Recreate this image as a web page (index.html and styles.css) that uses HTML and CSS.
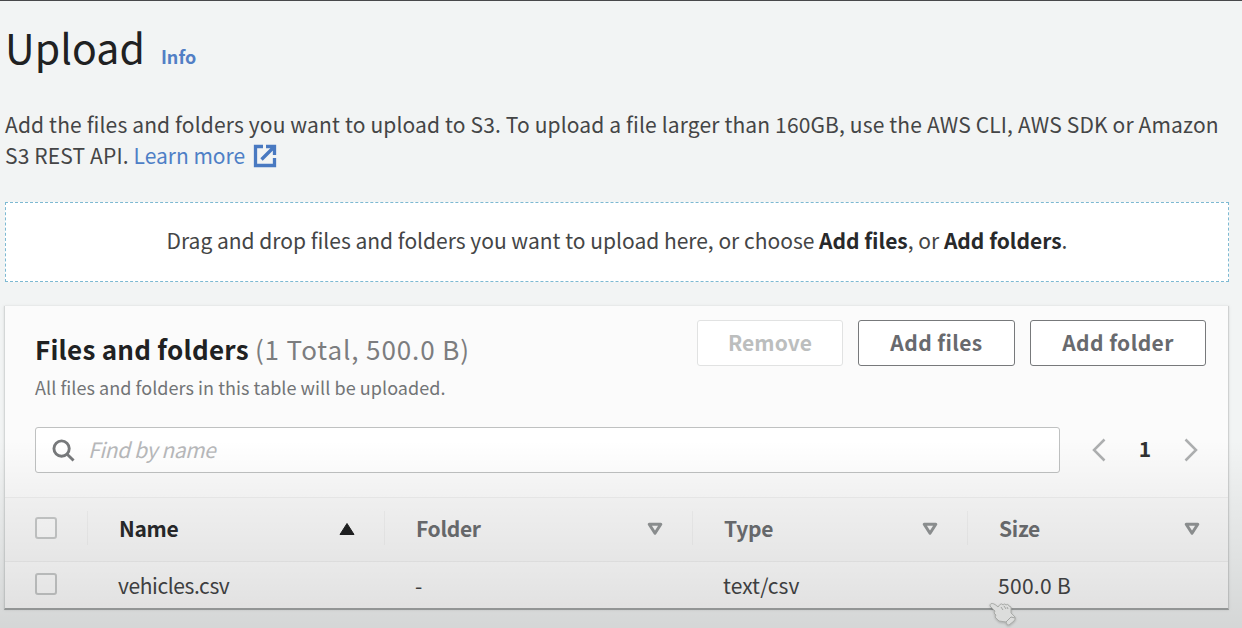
FILE: index.html
```
<!DOCTYPE html>
<html lang="en">
<head>
<meta charset="utf-8">
<title>Upload</title>
<link rel="stylesheet" href="styles.css">
</head>
<body>
<main class="page">
  <header class="heading"><h1>Upload</h1><a class="info">Info</a></header>
  <p class="intro"><span class="intro-first">Add the files and folders you want to upload to S3. To upload a file larger than 160GB, use the AWS CLI, AWS SDK or Amazon</span><br><span class="intro-second">S3 REST API.</span> <a class="learn">Learn more</a><svg class="external" viewBox="0 0 24 24"><path d="M10 2.5H2.5V21.5H21.5V14M13 2.5h8.500V11M21 3L8.500 15.500"/></svg></p>
  <section class="dropzone"><p><span class="drop-lead">Drag and drop files and folders you want to upload here, or choose</span> <b>Add files</b>, or <b>Add folders</b>.</p></section>
  <section class="panel">
    <div class="panel-head">
      <div>
        <h2><b>Files and folders</b> <span class="count">(1 Total, 500.0 B)</span></h2>
        <p class="description">All files and folders in this table will be uploaded.</p>
      </div>
      <div class="actions"><button class="remove" disabled>Remove</button><button class="add-files">Add files</button><button class="add-folder">Add folder</button></div>
    </div>
    <div class="tools">
      <div class="search"><svg class="lens" viewBox="0 0 24 24"><circle cx="10" cy="10" r="8"/><path d="M15.8 15.8L22.5 22.5"/></svg><span class="placeholder">Find by name</span></div>
      <nav class="pager"><svg viewBox="0 0 14 24"><path d="M12.5 1.5L2 12l10.500 10.500"/></svg><b>1</b><svg viewBox="0 0 14 24"><path d="M1.500 1.500L12 12L1.500 22.500"/></svg></nav>
    </div>
    <div class="row header">
      <div class="cell select"><span class="box"></span></div>
      <div class="cell name"><b>Name</b><svg class="sort" viewBox="0 0 16 14"><path class="filled" d="M8 1.500L15 12.500H1Z"/></svg></div>
      <div class="cell"><b>Folder</b><svg class="sort" viewBox="0 0 16 14"><path d="M2.200 2.200H13.800L8 11.300Z"/></svg></div>
      <div class="cell"><b>Type</b><svg class="sort" viewBox="0 0 16 14"><path d="M2.200 2.200H13.800L8 11.300Z"/></svg></div>
      <div class="cell"><b>Size</b><svg class="sort" viewBox="0 0 16 14"><path d="M2.200 2.200H13.800L8 11.300Z"/></svg></div>
    </div>
    <div class="row data">
      <div class="cell select"><span class="box"></span></div>
      <div class="cell"><span class="t-file">vehicles.csv</span></div><div class="cell"><span>-</span></div><div class="cell"><span class="t-type">text/csv</span></div><div class="cell"><span class="t-size">500.0 B</span></div>
    </div>
  </section>
</main>
<div class="shade"></div>
<svg class="hand" viewBox="0 0 30 26"><path class="hand-shape" d="M2 4C2 0 6 1 10 5L12 2.500Q14 1 15 3Q17 1 18 3Q20 1 21 4L23 5L23 11L27 15Q28 17 26 19L21 23Q19 24 18 20L11 19L7 15L8 13L6 11L7 9Z"/><path class="hand-lines" d="M13 5l2 3M16 4l2 3M19 5l1 2M18 20l5-5 4 1"/></svg>
</body>
</html>
```
FILE: styles.css
```
* { box-sizing: border-box; }
html { height: 628px; overflow: hidden; }
body { margin: 0; height: 628px; overflow: hidden; background: #f2f4f4; border-top: 1px solid #48484b; color: #444546; font: 21px/30px "Noto Sans CJK SC", "Noto Sans", sans-serif; }
h1, h2, p { margin: 0; font-weight: 400; }
b { font-weight: 700; }
svg { fill: none; flex: none; }
.page { padding: 15px 13px 0 4px; }
.heading { display: flex; align-items: baseline; gap: 16px; height: 93px; white-space: nowrap; padding-left: 1px; }
h1 { font-size: 41px; line-height: 60px; color: #202122; letter-spacing: .1px; }
.info { font-size: 18px; font-weight: 700; color: #527fc5; }
.intro { height: 93px; padding-left: 1px; line-height: 30.500px; white-space: nowrap; }
.intro-first { letter-spacing: .14px; }
.intro-second { letter-spacing: .15px; }
.learn { color: #4e7fc6; }
.external { width: 24px; height: 24px; margin-left: 8px; vertical-align: -4px; stroke: #4979c1; stroke-width: 3.300; }
.dropzone { height: 80px; margin-left: 1px; border: 1px dashed #7db9d2; background: #fff; display: flex; align-items: center; justify-content: center; white-space: nowrap; padding-bottom: 4px; }
.dropzone b { color: #28292b; }
.panel { margin-top: 24px; height: 304px; background: #fbfbfb; border-left: 1px solid #d4d7d7; border-right: 1px solid #cfd1d1; border-bottom: 2px solid #a4a7a7; box-shadow: 0 0 2px #bbb8; }
.panel-head { height: 121px; display: flex; justify-content: space-between; padding: 14px 22px 0 30px; white-space: nowrap; }
h2 { padding-top: 11px; font-size: 26px; line-height: 36px; color: #202122; letter-spacing: .25px; }
.count { color: #7c7d7f; letter-spacing: .9px; }
.description { font-size: 18px; line-height: 26px; margin-top: 7px; color: #727476; letter-spacing: .05px; }
.actions { display: flex; gap: 15px; }
button { height: 46px; padding: 0 0 3px; background: #fff; border: 1px solid #77797b; border-radius: 3px; font: 700 21px/30px "Noto Sans CJK SC", "Noto Sans", sans-serif; color: #686a6e; letter-spacing: .4px; }
.remove { width: 146px; color: #bcbebe; border-color: #e1e2e2; letter-spacing: .1px; }
.add-files { width: 157px; }
.add-folder { width: 176px; }
.tools { height: 70px; padding: 0 30px 24px 30px; display: flex; justify-content: space-between; }
.search { width: 1025px; height: 46px; background: #fff; border: 1px solid #bfc1c1; border-radius: 3px; display: flex; align-items: center; gap: 13px; padding: 0 0 3px 16px; }
.lens { width: 23px; height: 23px; margin-top: 3px; stroke: #77797b; stroke-width: 3; }
.placeholder { color: #b7b8ba; font-style: italic; letter-spacing: -.4px; }
.pager { display: flex; align-items: center; justify-content: space-between; width: 106px; color: #303132; }
.pager b { margin-top: -4px; }
.pager svg { width: 14px; height: 24px; stroke: #adafb0; stroke-width: 2.500; }
.row { display: grid; grid-template-columns: 82px 297px 308px 275px 1fr; align-items: center; white-space: nowrap; }
.header { height: 65px; background: #f9f9f9; border-top: 1px solid #eee; border-bottom: 1px solid #efefef; color: #6c6e71; padding-bottom: 3px; }
.cell { display: flex; align-items: center; justify-content: space-between; padding: 0 29px 0 31px; }
.header .cell + .cell { border-left: 1px solid #f0f0f0; height: 34px; }
.header .cell b { letter-spacing: -.3px; padding-bottom: 1px; }
.header .cell:last-child { padding-right: 28px; }
.cell.select { padding-left: 30px; }
.header .name { color: #28292b; }
.box { width: 22px; height: 22px; border: 2px solid #c8caca; border-radius: 3px; background: #fff8; }
.header .box { margin-top: -1px; }
.sort { width: 16px; height: 14px; margin-top: 2px; stroke: #929596; stroke-width: 3; stroke-linejoin: round; }
.filled { fill: #202122; stroke: #202122; stroke-width: 1; }
.data { height: 46px; background: #fdfdfd; padding-bottom: 1px; }
.data .box { margin-top: -1px; }
.t-file { letter-spacing: -.4px; }
.t-type { letter-spacing: .05px; }
.t-size { letter-spacing: .3px; }
.shade { position: absolute; inset: 440px 0 0; pointer-events: none; background: linear-gradient(#0000, #0000000a 30%, #00000014 65%, #0000001f); }
.hand { position: absolute; left: 988px; top: 602px; width: 30px; height: 26px; filter: drop-shadow(0 1px 1px #0003); }
.hand-shape { fill: #dcdddc; stroke: #a9aba8; stroke-width: 1; }
.hand-lines { stroke: #a2a4a2; stroke-width: 1; }
```
